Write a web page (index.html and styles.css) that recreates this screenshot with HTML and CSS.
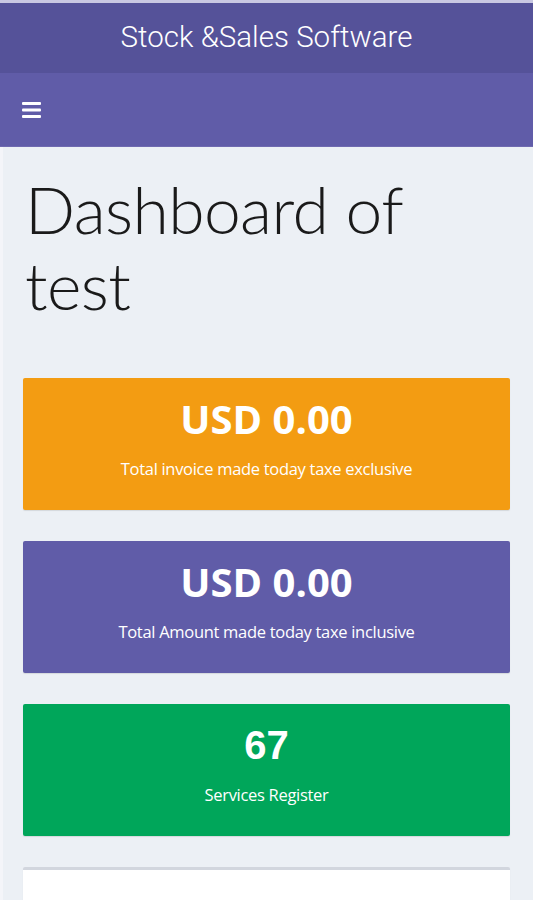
FILE: index.html
```html
<!DOCTYPE html>
<html>
<head>
<meta charset="utf-8">
<link rel="stylesheet" href="styles.css">
</head>
<body>
<div class="topline"></div>
<header class="logo">Stock &amp;Sales Software</header>
<nav class="navbar">
  <svg class="burger" width="19" height="16" viewBox="0 0 19 16">
    <rect x="0" y="0" width="19" height="3" rx="1" fill="#fff"/>
    <rect x="0" y="6.5" width="19" height="3" rx="1" fill="#fff"/>
    <rect x="0" y="13" width="19" height="3" rx="1" fill="#fff"/>
  </svg>
</nav>
<main class="content">
  <h1 class="title">Dashboard of test</h1>
  <div class="box orange">
    <div class="value">USD 0.00</div>
    <div class="label">Total invoice made today taxe exclusive</div>
  </div>
  <div class="box purple">
    <div class="value">USD 0.00</div>
    <div class="label">Total Amount made today taxe inclusive</div>
  </div>
  <div class="box green">
    <div class="value num">67</div>
    <div class="label">Services Register</div>
  </div>
  <div class="box white"></div>
</main>
</body>
</html>
```
FILE: styles.css
```css
html, body {
  margin: 0;
  padding: 0;
  background: #ecf0f5;
  height: 900px;
  overflow: hidden;
}
.topline {
  height: 3px;
  background: #c9c8e2;
}
.logo {
  height: 70px;
  background: #555299;
  color: #fff;
  font-family: Roboto, sans-serif;
  font-weight: 300;
  font-size: 29.5px;
  display: flex;
  align-items: center;
  justify-content: center;
  padding-bottom: 2px;
  box-sizing: border-box;
}
.navbar {
  height: 74px;
  background: #605ca8;
  display: flex;
  align-items: center;
  padding-left: 22px;
  border-bottom: 1px solid #6f6ab0;
  box-sizing: border-box;
}
.burger { display: block; margin-top: 1px; }
.content {
  padding: 0 23px 0 20px;
  border-left: 3px solid #f4f5f9;
}
.title {
  margin: 0;
  padding-top: 24px;
  font-family: Lato, sans-serif;
  font-weight: 300;
  font-size: 66px;
  line-height: 76px;
  color: #1a1a1a;
  letter-spacing: -0.6px;
  padding-left: 2px;
}
.box {
  height: 132px;
  margin-top: 31px;
  border-radius: 2px;
  color: #fff;
  text-align: center;
  font-family: "Open Sans", sans-serif;
  box-sizing: border-box;
  padding-top: 14px;
  box-shadow: 0 1px 1px rgba(0, 0, 0, 0.1);
}
.title + .box { margin-top: 55px; }
.orange { background: #f39c12; }
.purple { background: #605ca8; }
.green { background: #00a65a; }
.white { background: #fff; border-top: 3px solid #d2d6de; }
.value {
  font-weight: 700;
  font-size: 40px;
  line-height: 54px;
}
.value.num {
  font-family: "Liberation Sans", Arial, sans-serif;
  font-size: 40px;
}
.label {
  font-size: 16.5px;
  margin-top: 11px;
  letter-spacing: -0.3px;
}
```
